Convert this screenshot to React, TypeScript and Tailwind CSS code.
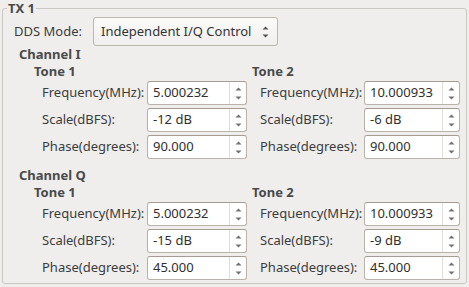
import React from "react";

const font = { fontFamily: '"Noto Sans", "Open Sans", sans-serif' };

function Arrows() {
  return (
    <div className="flex w-[17px] flex-col items-center justify-center gap-[5px] border-l border-[#e2dfdb]">
      <svg width="7" height="4" viewBox="0 0 7 4">
        <path d="M0.5 3.5 L3.5 0.5 L6.5 3.5 Z" fill="#707070" />
      </svg>
      <svg width="7" height="4" viewBox="0 0 7 4">
        <path d="M0.5 0.5 L3.5 3.5 L6.5 0.5 Z" fill="#707070" />
      </svg>
    </div>
  );
}

function Spin({ value, w }: { value: string; w: string }) {
  return (
    <div
      className={`flex h-[24px] ${w} rounded-[3px] border border-[#b9b2aa] border-t-[#a49c93] bg-white`}
    >
      <div className="flex flex-1 items-center pl-[5px] text-[13px] text-[#2f2f2f]">{value}</div>
      <Arrows />
    </div>
  );
}

function Row({ label, value, labelW, w }: { label: string; value: string; labelW: string; w: string }) {
  return (
    <div className="flex items-center">
      <div className={`${labelW} text-[13px] text-[#3c3c3c]`}>{label}</div>
      <Spin value={value} w={w} />
    </div>
  );
}

function Tone({
  title,
  vals,
  labelW,
  w,
}: {
  title: string;
  vals: [string, string, string];
  labelW: string;
  w: string;
}) {
  return (
    <div className="flex flex-col">
      <div className="h-[16px] text-[13px] font-bold leading-[16px] text-[#4a4a4a]">{title}</div>
      <div className="mt-[2px] flex flex-col gap-[3px] pl-[8px]">
        <Row label="Frequency(MHz):" value={vals[0]} labelW={labelW} w={w} />
        <Row label="Scale(dBFS):" value={vals[1]} labelW={labelW} w={w} />
        <Row label="Phase(degrees):" value={vals[2]} labelW={labelW} w={w} />
      </div>
    </div>
  );
}

function Channel({
  title,
  t1,
  t2,
}: {
  title: string;
  t1: [string, string, string];
  t2: [string, string, string];
}) {
  return (
    <div className="flex flex-col">
      <div className="h-[17px] pl-[16px] text-[13px] font-bold leading-[17px] text-[#4a4a4a]">{title}</div>
      <div className="flex pl-[31px]">
        <div className="w-[218px]">
          <Tone title="Tone 1" vals={t1} labelW="w-[105px]" w="w-[100px]" />
        </div>
        <div>
          <Tone title="Tone 2" vals={t2} labelW="w-[104px]" w="w-[96px]" />
        </div>
      </div>
    </div>
  );
}

export default function App() {
  return (
    <div className="h-[287px] w-[469px] bg-[#efeeec] pl-[2px] pr-[2px] pt-[8px]" style={font}>
      <div className="relative h-[276px] w-[465px] rounded-[3px] border border-[#cbc7c2]">
        <div className="absolute left-[4px] top-[-9px] bg-[#efeeec] px-[1px] text-[13px] font-bold leading-[17px] text-[#4a4a4a]">
          TX 1
        </div>
        <div className="flex flex-col pt-[8px]">
          <div className="flex items-center pl-[11px]">
            <div className="w-[79px] text-[13px] text-[#3c3c3c]">DDS Mode:</div>
            <div className="flex h-[29px] w-[185px] items-center rounded-[3px] border border-[#bdb6ae] bg-gradient-to-b from-[#fbfbfa] to-[#f1efed] pl-[7px] pr-[8px] text-[13px] text-[#333]">
              <span className="flex-1">Independent I/Q Control</span>
              <div className="flex flex-col items-center gap-[4px]">
                <svg width="7" height="4" viewBox="0 0 7 4">
                  <path d="M0.5 3.5 L3.5 0.5 L6.5 3.5 Z" fill="#555" />
                </svg>
                <svg width="7" height="4" viewBox="0 0 7 4">
                  <path d="M0.5 0.5 L3.5 3.5 L6.5 0.5 Z" fill="#555" />
                </svg>
              </div>
            </div>
          </div>
          <div>
            <Channel
              title="Channel I"
              t1={["5.000232", "-12 dB", "90.000"]}
              t2={["10.000933", "-6 dB", "90.000"]}
            />
          </div>
          <div className="mt-[8px]">
            <Channel
              title="Channel Q"
              t1={["5.000232", "-15 dB", "45.000"]}
              t2={["10.000933", "-9 dB", "45.000"]}
            />
          </div>
        </div>
      </div>
    </div>
  );
}
